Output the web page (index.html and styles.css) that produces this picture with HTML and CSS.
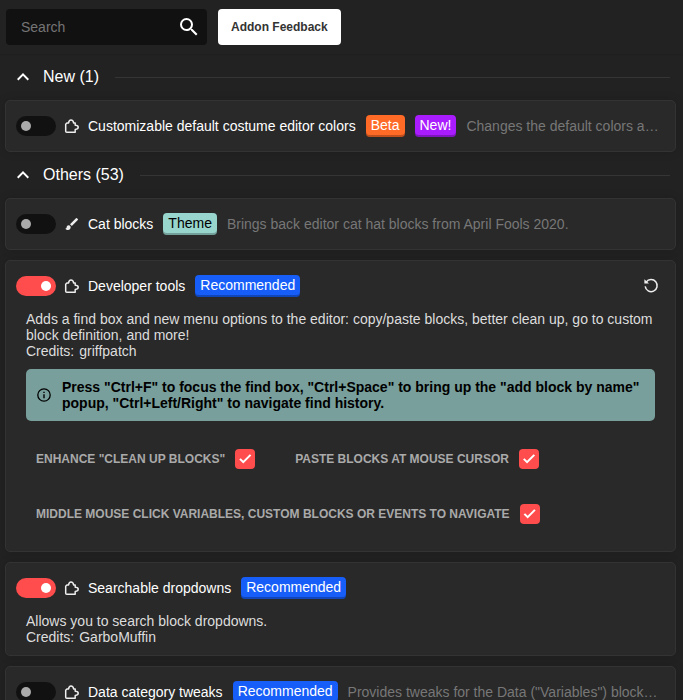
FILE: index.html
```html
<!DOCTYPE html>
<html lang="en">
<head>
<meta charset="utf-8">
<meta name="viewport" content="width=device-width, initial-scale=1">
<title>Addon Settings</title>
<link rel="stylesheet" href="styles.css">
</head>
<body>
<svg class="sprite" aria-hidden="true">
  <symbol id="puzzle" viewBox="0 0 16 16"><path d="M2.9 5H4.6C4.8 3.4 5.6 2.1 7 2.1S9.4 3.4 9.6 5H11.2V7.3C12.9 7.3 14.2 8 14.2 9.3S12.9 11.3 11.2 11.5V14.2H2.7C2.1 14.2 1.7 13.8 1.7 13.2V6.2Z" fill="none" stroke="currentColor" stroke-width="1.5" stroke-linejoin="round"/></symbol>
  <symbol id="brush" viewBox="0 0 24 24"><path d="M7 14c-1.66 0-3 1.34-3 3 0 1.31-1.16 2-2 2 .92 1.22 2.49 2 4 2 2.21 0 4-1.79 4-4 0-1.66-1.34-3-3-3zm13.71-9.37l-1.34-1.34a1 1 0 0 0-1.41 0L9 12.25 11.75 15l8.96-8.96a1 1 0 0 0 0-1.41z" fill="currentColor"/></symbol>
  <symbol id="chevron" viewBox="0 0 24 24"><path d="M12 8l-6 6 1.41 1.41L12 10.83l4.59 4.58L18 14z" fill="currentColor"/></symbol>
</svg>

<header class="toolbar">
  <div class="search">
    <input class="search-input" type="text" placeholder="Search" aria-label="Search">
    <svg class="search-icon" viewBox="0 0 24 24" aria-hidden="true"><path d="M15.5 14h-.79l-.28-.27A6.47 6.47 0 0 0 16 9.5 6.5 6.5 0 1 0 9.5 16c1.61 0 3.09-.59 4.23-1.57l.27.28v.79l5 4.99L20.49 19l-4.99-5zm-6 0C7.01 14 5 11.99 5 9.5S7.01 5 9.5 5 14 7.01 14 9.5 11.99 14 9.5 14z" fill="currentColor"/></svg>
  </div>
  <button class="feedback" type="button">Addon Feedback</button>
</header>

<main>
  <section class="group">
    <h2 class="group-title"><svg class="chevron" aria-hidden="true"><use href="#chevron"/></svg><span>New (1)</span></h2>
    <article class="card">
      <div class="card-head">
        <input class="toggle" type="checkbox" id="costume">
        <label class="name" for="costume"><svg class="icon" aria-hidden="true"><use href="#puzzle"/></svg>Customizable default costume editor colors</label>
        <span class="tag beta">Beta</span>
        <span class="tag new">New!</span>
        <span class="summary">Changes the default colors and outline size used by the costume editor.</span>
      </div>
    </article>
  </section>

  <section class="group">
    <h2 class="group-title"><svg class="chevron" aria-hidden="true"><use href="#chevron"/></svg><span>Others (53)</span></h2>
    <article class="card">
      <div class="card-head">
        <input class="toggle" type="checkbox" id="cat">
        <label class="name" for="cat"><svg class="icon" aria-hidden="true"><use href="#brush"/></svg>Cat blocks</label>
        <span class="tag theme">Theme</span>
        <span class="summary">Brings back editor cat hat blocks from April Fools 2020.</span>
      </div>
    </article>

    <article class="card">
      <div class="card-head">
        <input class="toggle" type="checkbox" id="devtools" checked>
        <label class="name" for="devtools"><svg class="icon" aria-hidden="true"><use href="#puzzle"/></svg>Developer tools</label>
        <span class="tag recommended">Recommended</span>
        <button class="reset" type="button" aria-label="Reset"><svg class="icon" viewBox="0 0 16 16" aria-hidden="true"><path d="M3.2 4.2A6 6 0 1 1 2.2 8.4" fill="none" stroke="currentColor" stroke-width="1.5"/><path d="M1.4 1.2V5.6H6Z" fill="currentColor"/></svg></button>
      </div>
      <div class="card-body">
        <p>Adds a find box and new menu options to the editor: copy/paste blocks, better clean up, go to custom block definition, and more!</p>
        <p class="credits"><span>Credits:</span><span>griffpatch</span></p>
        <div class="notice">
          <svg class="icon" viewBox="0 0 16 16" aria-hidden="true"><circle cx="8" cy="8" r="6.2" fill="none" stroke="currentColor" stroke-width="1.3"/><path d="M7.3 4.7h1.4V6H7.3zM7.3 7.3h1.4v4H7.3z" fill="currentColor"/></svg>
          <p>Press "Ctrl+F" to focus the find box, "Ctrl+Space" to bring up the "add block by name" popup, "Ctrl+Left/Right" to navigate find history.</p>
        </div>
        <div class="settings">
          <label class="setting">Enhance "Clean Up Blocks"<input class="check" type="checkbox" checked></label>
          <label class="setting">Paste blocks at mouse cursor<input class="check" type="checkbox" checked></label>
          <label class="setting">Middle mouse click variables, custom blocks or events to navigate<input class="check" type="checkbox" checked></label>
        </div>
      </div>
    </article>

    <article class="card">
      <div class="card-head">
        <input class="toggle" type="checkbox" id="dropdowns" checked>
        <label class="name" for="dropdowns"><svg class="icon" aria-hidden="true"><use href="#puzzle"/></svg>Searchable dropdowns</label>
        <span class="tag recommended">Recommended</span>
      </div>
      <div class="card-body">
        <p>Allows you to search block dropdowns.</p>
        <p class="credits"><span>Credits:</span><span>GarboMuffin</span></p>
      </div>
    </article>

    <article class="card">
      <div class="card-head">
        <input class="toggle" type="checkbox" id="data">
        <label class="name" for="data"><svg class="icon" aria-hidden="true"><use href="#puzzle"/></svg>Data category tweaks</label>
        <span class="tag recommended">Recommended</span>
        <span class="summary">Provides tweaks for the Data ("Variables") block category in the editor.</span>
      </div>
    </article>
  </section>
</main>
</body>
</html>
```
FILE: styles.css
```css
* { box-sizing: border-box; }

html { scrollbar-width: none; }

body {
  margin: 0;
  background: #222;
  color: #fff;
  font: 14px/16px "Liberation Sans", Arial, sans-serif;
}

p, h2 { margin: 0; }

button, input { font: inherit; margin: 0; }

.sprite { display: none; }

.toolbar {
  position: sticky;
  top: 0;
  z-index: 1;
  display: flex;
  gap: 11px;
  padding: 9px 6px;
  background: #222;
  box-shadow: 0 0 2px rgba(0, 0, 0, .2);
}

.search {
  display: flex;
  align-items: center;
  width: 201px;
  height: 36px;
  padding-right: 6px;
  border-radius: 4px;
  background: #111;
}

.search-input {
  flex: 1;
  min-width: 0;
  height: 100%;
  padding: 0 15px;
  border: 0;
  outline: 0;
  background: none;
  color: #fff;
}

.search-input::placeholder { color: #757575; }

.search-icon, .chevron {
  flex: none;
  width: 24px;
  height: 24px;
}

.feedback {
  padding: 0 13px;
  border: 0;
  border-radius: 4px;
  background: #fff;
  color: #333;
  font-size: 12px;
  font-weight: bold;
}

.group { padding: 0 7px 0 5px; }

.group-title {
  display: flex;
  align-items: center;
  height: 46px;
  padding: 0 6px;
  font-size: 16px;
  font-weight: normal;
}

.group-title span { margin-left: 8px; }

.group-title::after {
  content: "";
  flex: 1;
  height: 1px;
  margin-left: 16px;
  background: #353535;
}

.card {
  border: 1px solid #333;
  border-radius: 5px;
  background: #292929;
  box-shadow: 0 0 10px rgba(0, 0, 0, .15);
}

.card + .card { margin-top: 10px; }

.card-head {
  display: flex;
  align-items: center;
  gap: 10px;
  height: 50px;
  padding: 0 16px 0 10px;
}

.toggle {
  appearance: none;
  flex: none;
  width: 40px;
  height: 20px;
  padding: 5px;
  border-radius: 10px;
  background: #111;
}

.toggle::before {
  content: "";
  display: block;
  width: 10px;
  height: 10px;
  border-radius: 50%;
  background: #aaa;
}

.toggle:checked { background: #ff4c4c; }

.toggle:checked::before {
  margin-left: auto;
  background: #fff;
}

.name {
  display: flex;
  flex: none;
  align-items: center;
  gap: 8px;
  margin-left: -2px;
}

.icon {
  display: block;
  flex: none;
  width: 16px;
  height: 16px;
  color: #eee;
}

.tag {
  flex: none;
  height: 22px;
  padding: 2px 5px;
  border-radius: 4px;
  box-shadow: inset 0 -2px rgba(0, 0, 0, .25);
}

.beta { background: #ff6a26; }
.new { background: #a91cff; }
.theme { background: #98d5cd; color: #000; }
.recommended { background: #175ef8; }

.summary {
  min-width: 0;
  overflow: hidden;
  color: #777;
  text-overflow: ellipsis;
  white-space: nowrap;
}

.reset {
  margin-left: auto;
  padding: 0;
  border: 0;
  background: none;
}

.card-body {
  padding: 0 20px 10px;
  color: #ddd;
}

.credits { display: flex; gap: 5px; }

.notice {
  display: flex;
  align-items: center;
  gap: 10px;
  margin-top: 10px;
  padding: 10px;
  border-radius: 5px;
  background: #789f9b;
  color: #000;
  font-weight: bold;
}

.notice .icon { color: #000; }

.settings {
  display: flex;
  flex-wrap: wrap;
  column-gap: 20px;
  margin-top: 10px;
}

.setting {
  display: flex;
  align-items: center;
  gap: 10px;
  height: 55px;
  padding: 0 10px;
  color: #aaa;
  font-size: 12px;
  font-weight: bold;
  text-transform: uppercase;
}

.check {
  appearance: none;
  flex: none;
  width: 20px;
  height: 20px;
  padding: 2px;
  border-radius: 4px;
  background: #111;
}

.check:checked { background: #ff4c4c; }

.check:checked::before {
  content: "";
  display: block;
  width: 16px;
  height: 16px;
  background: #fff;
  clip-path: polygon(38% 64%, 22% 48%, 13% 57%, 38% 82%, 88% 32%, 79% 23%);
}
```
